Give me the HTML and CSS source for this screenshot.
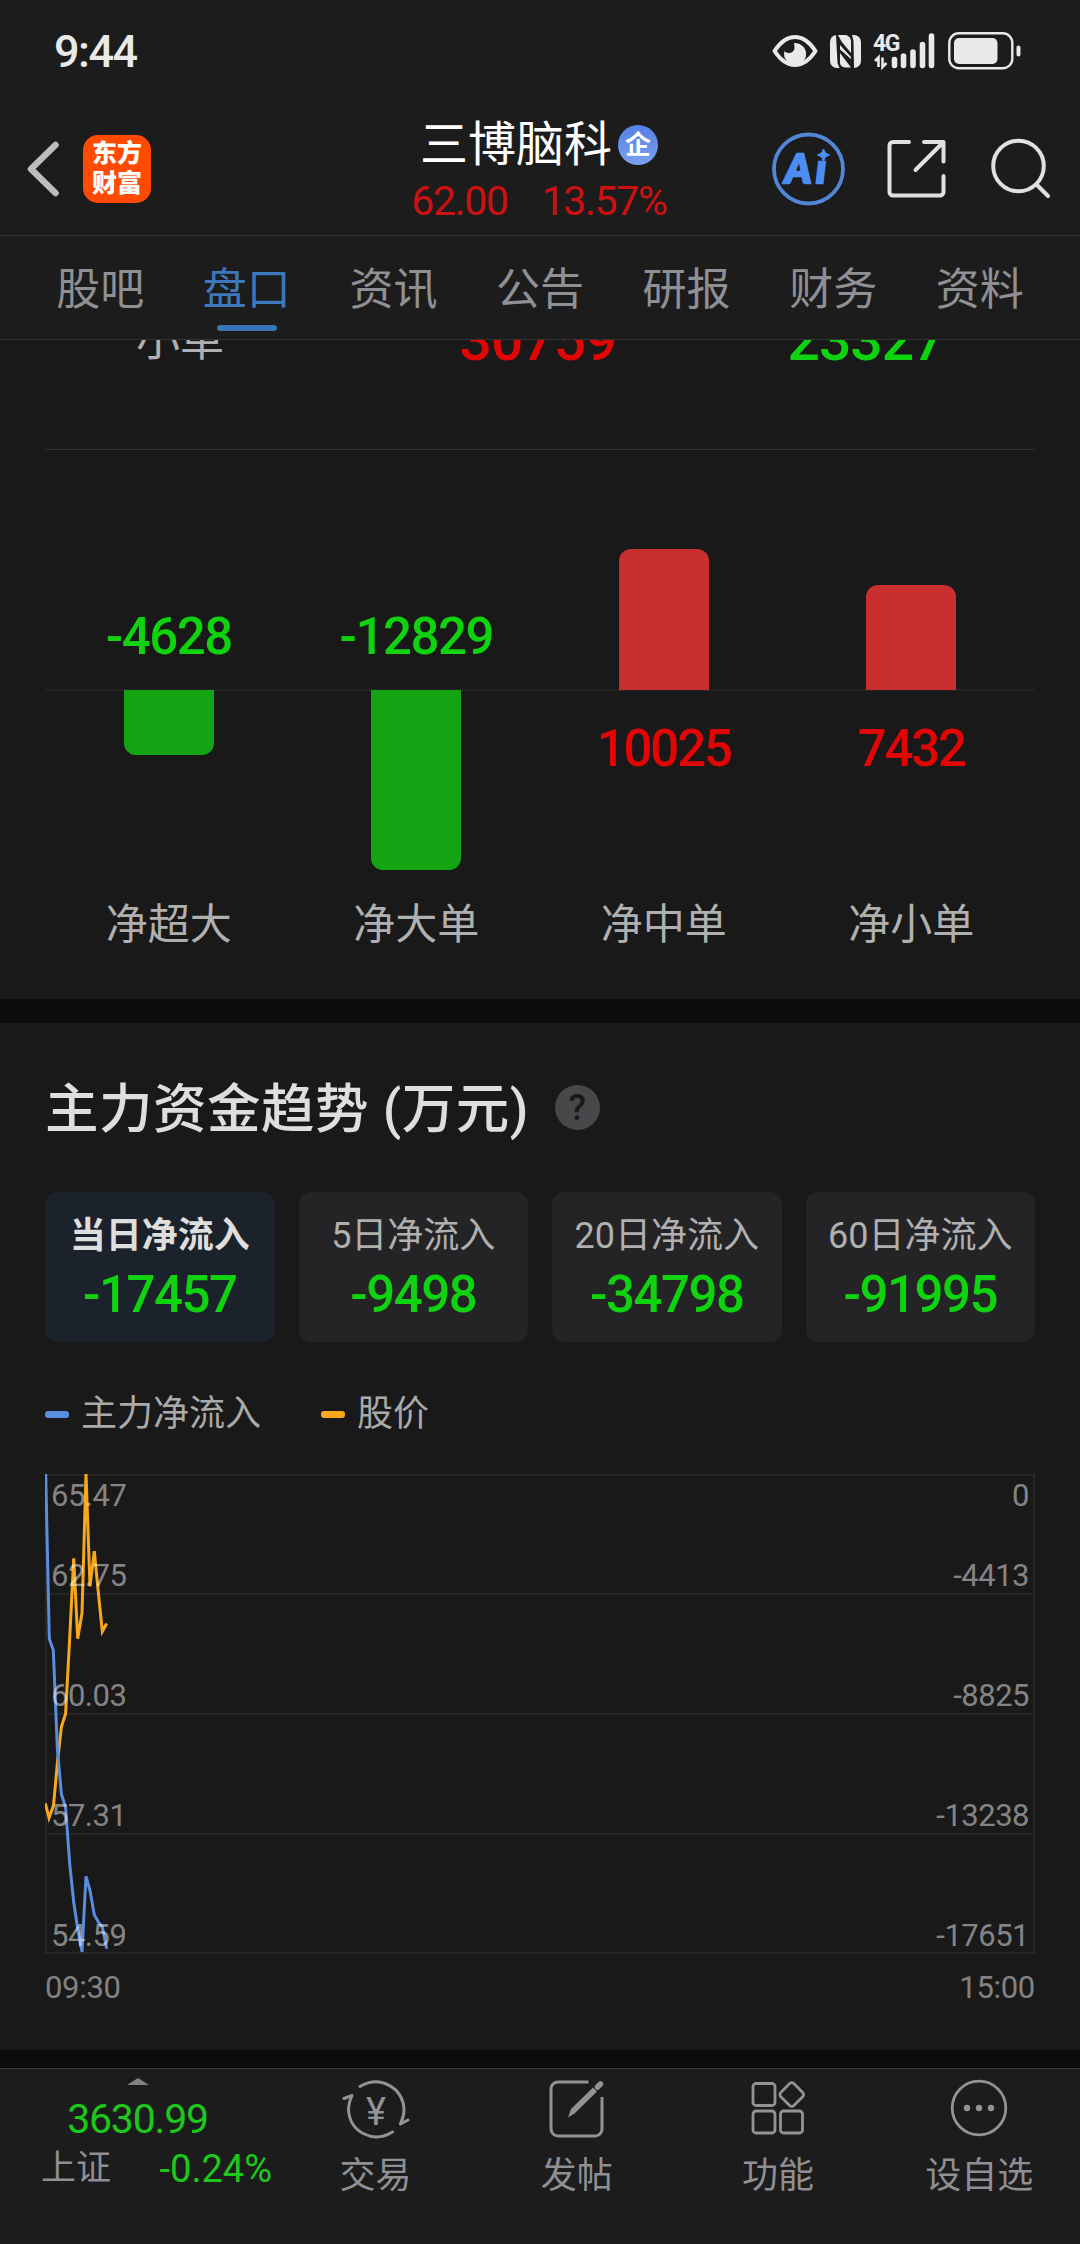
FILE: index.html
```html
<!DOCTYPE html>
<html lang="zh-CN">

<head>
  <meta charset="UTF-8">
  <meta name="viewport" content="width=device-width, initial-scale=1.0">
  <title>三博脑科 - 盘口</title>
  <link rel="stylesheet" href="styles.css">
</head>

<body>
  <div class="app">
    <div class="status-bar">
      <span class="clock">9:44</span>
      <div class="status-icons">
        <svg class="eye" width="46" height="32" viewBox="0 0 46 32">
          <path d="M2.500 16C9 6 16 2 23 2s14 4 20.500 14C37 26 30 30 23 30S9 26 2.500 16z" fill="none" stroke="#e9e9e9" stroke-width="4" stroke-linejoin="round"/>
          <path d="M22 8a11 11 0 1 1-9.500 8c2 3 9.500 3 10-3 .2-2-.5-3.500-.5-5z" fill="#e9e9e9"/>
        </svg>
        <svg class="nfc" width="31" height="33" viewBox="0 0 31 33">
          <path d="M6 0L7.500 28l2 5H7a7 7 0 0 1-7-7V7a7 7 0 0 1 6-7zM22 0h2a7 7 0 0 1 7 7v19a7 7 0 0 1-7 7l-.5-27z" fill="#e9e9e9"/>
          <path d="M8 0h7a6 6 0 0 1 6 6v12L11.500 6.500zM10 10l11 12v2L10 14.500zM10 18l11 14.500h-6a5 5 0 0 1-5-5z" fill="#e9e9e9"/>
        </svg>
        <svg class="signal" width="63" height="36" viewBox="0 0 63 36">
          <text x="0" y="18" class="net">4G</text>
          <path d="M5.500 34V24.500L2 28M9.500 24.500V34l4-4" fill="none" stroke="#e9e9e9" stroke-width="2.600"/>
          <path d="M21.500 26.500v6M30.500 23v9.500M40 19v13.500M49.500 11.500v21M58.500 3v29.500" stroke="#e9e9e9" stroke-width="5.600" stroke-linecap="round"/>
        </svg>
        <svg class="battery" width="73" height="38" viewBox="0 0 73 38">
          <rect x="1.300" y="1.300" width="63" height="35" rx="9.500" fill="none" stroke="#e9e9e9" stroke-width="2.400"/>
          <rect x="6" y="6" width="43.500" height="26" rx="5" fill="#e9e9e9"/>
          <rect x="68.500" y="13.500" width="4" height="11" rx="2" fill="#e9e9e9"/>
        </svg>
      </div>
    </div>

    <header class="header">
      <div class="header-left">
        <svg width="32" height="56" viewBox="0 0 32 56">
          <path d="M28.500 4L4 28l24.500 24" fill="none" stroke="#bdbdbd" stroke-width="6.500" stroke-linecap="round" stroke-linejoin="round"/>
        </svg>
        <div class="logo"><span>东方</span><span>财富</span></div>
      </div>
      <div class="stock">
        <div class="stock-name">三博脑科<span class="badge">企</span></div>
        <div class="stock-price"><span>62.00</span><span>13.57%</span></div>
      </div>
      <div class="header-right">
        <svg class="ai" width="73" height="74" viewBox="0 0 73 74">
          <circle cx="36.500" cy="37" r="34.500" fill="none" stroke="#5287d8" stroke-width="3.800"/>
          <text x="13" y="51" class="ai-text">A</text>
          <text x="44" y="51" class="ai-text">ı</text>
          <path d="M51.500 17l2 4 4 2-4 2-2 4-2-4-4-2 4-2z" fill="#4d8cf2" stroke="#4d8cf2"/>
        </svg>
        <svg class="share" width="60" height="60" viewBox="0 0 60 60">
          <path d="M22 3H6a3.500 3.500 0 0 0-3.500 3.500V53a3.500 3.500 0 0 0 3.500 3.500h47a3.500 3.500 0 0 0 3.500-3.500V37M37 3h19.500v19.500M56 3.500L28.500 31" fill="none" stroke="#e0e0e0" stroke-width="4" stroke-linecap="round" stroke-linejoin="round"/>
        </svg>
        <svg class="search" width="60" height="62" viewBox="0 0 60 62">
          <circle cx="27.500" cy="28" r="25.300" fill="none" stroke="#e0e0e0" stroke-width="4"/>
          <path d="M46 47l11 11" stroke="#e0e0e0" stroke-width="4" stroke-linecap="round"/>
        </svg>
      </div>
    </header>

    <nav class="tabs">
      <span>股吧</span>
      <span class="active">盘口</span>
      <span>资讯</span>
      <span>公告</span>
      <span>研报</span>
      <span>财务</span>
      <span>资料</span>
    </nav>

    <main>
      <section class="orders">
        <div class="order-row">
          <span class="order-name">小单</span>
          <span class="order-num red">30759</span>
          <span class="order-num green">23327</span>
        </div>
        <div class="bars">
          <div class="bar-col down">
            <span class="bar-value green">-4628</span>
            <div class="bar" style="height: 65px"></div>
          </div>
          <div class="bar-col down">
            <span class="bar-value green">-12829</span>
            <div class="bar" style="height: 180px"></div>
          </div>
          <div class="bar-col up">
            <div class="bar" style="height: 141px"></div>
            <span class="bar-value red">10025</span>
          </div>
          <div class="bar-col up">
            <div class="bar" style="height: 105px"></div>
            <span class="bar-value red">7432</span>
          </div>
        </div>
        <div class="bar-labels">
          <span>净超大</span>
          <span>净大单</span>
          <span>净中单</span>
          <span>净小单</span>
        </div>
      </section>

      <section class="trend">
        <h2>主力资金趋势 (万元)<span class="help">?</span></h2>
        <div class="cards">
          <div class="card selected">
            <span class="card-label">当日净流入</span>
            <span class="card-value">-17457</span>
          </div>
          <div class="card">
            <span class="card-label">5日净流入</span>
            <span class="card-value">-9498</span>
          </div>
          <div class="card">
            <span class="card-label">20日净流入</span>
            <span class="card-value">-34798</span>
          </div>
          <div class="card">
            <span class="card-label">60日净流入</span>
            <span class="card-value">-91995</span>
          </div>
        </div>
        <div class="legend">
          <span class="flow">主力净流入</span>
          <span class="price">股价</span>
        </div>
        <div class="chart">
          <svg class="lines" width="990" height="480" viewBox="0 0 990 480">
            <path d="M0 1H990M0 120H990M0 240H990M0 360H990M0 479H990M1 0V480M989 0V480" stroke="#262628" stroke-width="2"/>
            <polyline points="0.300,329.300 4,343.900 8.500,331.600 12.600,286.500 16.400,252.800 20.600,239.800 24.700,164 28.700,84.400 32.700,164.800 37,139.100 41,0 45,112.300 49.300,77.100 53.300,118.100 57.300,157.500 61.700,149.500" fill="none" stroke="#f7a81b" stroke-width="3"/>
            <polyline points="0.700,0 4.300,164.800 8.300,176.300 12.400,275 16.400,320.100 20.600,333.200 24.700,389.800 28.700,428 32.700,454.900 37,478 41,402.400 45,416.600 49.300,440.700 53.300,448 57.300,453 61.700,474.800" fill="none" stroke="#5a8dde" stroke-width="3"/>
          </svg>
          <div class="grid-row first"><span>65.47</span><span>0</span></div>
          <div class="grid-row"><span>62.75</span><span>-4413</span></div>
          <div class="grid-row"><span>60.03</span><span>-8825</span></div>
          <div class="grid-row"><span>57.31</span><span>-13238</span></div>
          <div class="grid-row"><span>54.59</span><span>-17651</span></div>
        </div>
        <div class="times"><span>09:30</span><span>15:00</span></div>
      </section>
    </main>

    <footer class="footer">
      <div class="index">
        <i class="arrow-up"></i>
        <div class="index-value">3630.99</div>
        <div class="index-row"><span class="index-name">上证</span><span class="index-change">-0.24%</span></div>
      </div>
      <div class="nav-item">
        <svg width="68" height="62" viewBox="0 0 68 62">
          <g fill="none" stroke="#929297" stroke-width="3" stroke-linecap="round" stroke-linejoin="round">
            <path d="M18 7.500C38-4 61 8 62 31c0 6-2 10-3.500 14l7.500-4"/>
            <path d="M50.500 53C31 65 8 53 6.500 31c0-6 1.500-10 3.500-14.500L2 19.500"/>
          </g>
          <text x="34" y="45.500" class="yuan" text-anchor="middle">¥</text>
        </svg>
        <span>交易</span>
      </div>
      <div class="nav-item">
        <svg width="56" height="62" viewBox="0 0 56 62">
          <path d="M39.500 3H9a7 7 0 0 0-7 7v40a7 7 0 0 0 7 7h37a7 7 0 0 0 7-7V18" fill="none" stroke="#929297" stroke-width="3"/>
          <path d="M19 38.500l3-8.500 22-21.500 4 4-22.500 22z" fill="#929297"/>
          <path d="M48.500 8l3-3" stroke="#929297" stroke-width="5.500" stroke-linecap="round"/>
        </svg>
        <span>发帖</span>
      </div>
      <div class="nav-item">
        <svg width="54" height="62" viewBox="0 0 54 62">
          <g fill="none" stroke="#929297" stroke-width="2.800" stroke-linejoin="round">
            <rect x="2" y="4.500" width="22" height="22" rx="3"/>
            <rect x="2" y="32" width="22" height="22" rx="3"/>
            <rect x="29.500" y="32" width="22" height="22" rx="3"/>
            <rect x="31.500" y="6.300" width="18.500" height="18.500" rx="3" transform="rotate(45 40.750 15.550)"/>
          </g>
        </svg>
        <span>功能</span>
      </div>
      <div class="nav-item">
        <svg width="58" height="62" viewBox="0 0 58 62">
          <circle cx="29" cy="29" r="26.800" fill="none" stroke="#929297" stroke-width="2.800"/>
          <circle cx="17" cy="29" r="3.200" fill="#929297"/>
          <circle cx="29" cy="29" r="3.200" fill="#929297"/>
          <circle cx="41" cy="29" r="3.200" fill="#929297"/>
        </svg>
        <span>设自选</span>
      </div>
    </footer>
  </div>
</body>

</html>
```

FILE: styles.css
```css
* {
  margin: 0;
  padding: 0;
  box-sizing: border-box;
}

body {
  width: 1080px;
  height: 2244px;
  overflow: hidden;
  background: #19191a;
  color: #dedede;
  font-family: Roboto, "Noto Sans CJK SC", sans-serif;
}

svg {
  display: block;
  flex: none;
}

.red {
  color: #e10505;
}

.green {
  color: #0fd30f;
}

.app {
  height: 2244px;
  display: flex;
  flex-direction: column;
}

/* 状态栏 */
.status-bar {
  height: 102px;
  padding: 0 59px 0 54px;
  display: flex;
  justify-content: space-between;
  align-items: center;
  background: #1c1c1c;
}

.clock {
  font-size: 45px;
  line-height: 60px;
  padding-top: 2px;
  font-weight: 500;
  letter-spacing: -1.5px;
  color: #e9e9e9;
}

.status-icons {
  display: flex;
  align-items: center;
  gap: 12px;
}

.signal {
  overflow: visible;
}

.net {
  font-size: 23px;
  font-weight: 700;
  letter-spacing: -1.5px;
  fill: #e9e9e9;
}

/* 顶部 */
.header {
  height: 134px;
  padding: 0 29px 0 27px;
  display: grid;
  grid-template-columns: 1fr auto 1fr;
  align-items: center;
  background: #1c1c1c;
  border-bottom: 1px solid #333;
}

.header-left {
  display: flex;
  align-items: center;
  gap: 24px;
}

.logo {
  width: 68px;
  height: 68px;
  padding-top: 4px;
  border-radius: 15px;
  background: #ff4a02;
  color: #fff;
  display: flex;
  flex-direction: column;
  align-items: center;
  font-size: 25px;
  font-weight: 900;
  line-height: 30px;
}

.stock {
  text-align: center;
  padding-top: 3px;
}

.stock-name {
  height: 61px;
  line-height: 61px;
  display: flex;
  justify-content: center;
  align-items: center;
  gap: 6px;
  font-size: 48px;
  color: #fff;
}

.badge {
  width: 40px;
  height: 40px;
  border-radius: 50%;
  background: linear-gradient(#5580e6, #7aa2ee);
  font-size: 26px;
  line-height: 40px;
  font-weight: 700;
}

.stock-price {
  display: flex;
  justify-content: center;
  gap: 34px;
  height: 51px;
  line-height: 53px;
  font-size: 41px;
  letter-spacing: -1.3px;
  color: #cc1111;
}

.header-right {
  display: flex;
  justify-content: flex-end;
  align-items: center;
}

.share {
  margin: 0 44px 0 42px;
}

.ai-text {
  font-family: Lato, sans-serif;
  font-size: 40px;
  font-weight: 900;
  font-style: italic;
  fill: #4d8cf2;
  stroke: #4d8cf2;
  stroke-width: 2.5px;
}

/* 标签页 */
.tabs {
  height: 104px;
  padding: 0 27px;
  display: flex;
  background: #1c1c1c;
  border-bottom: 1px solid #333;
}

.tabs span {
  flex: 1;
  text-align: center;
  font-size: 44px;
  line-height: 109px;
  color: #8f8f94;
}

.tabs .active {
  color: #3b78bc;
}

.tabs .active::after {
  content: "";
  display: block;
  width: 60px;
  height: 6px;
  margin: -20px auto 0;
  border-radius: 3px;
  background: #3875b8;
}

/* 成交分布 */
.orders {
  height: 659px;
  padding: 0 45px;
  overflow: hidden;
}

.order-row {
  height: 110px;
  border-bottom: 1px solid #303032;
  display: grid;
  grid-template-columns: 270px 446px 210px;
  text-align: center;
}

.order-row span {
  line-height: 60px;
  margin-top: -29px;
}

.order-name {
  font-size: 44px;
  color: #b0b0b0;
}

.order-num {
  font-size: 57px;
  font-weight: 500;
  letter-spacing: -1px;
}

.bars {
  height: 430px;
  display: grid;
  grid-template-columns: repeat(4, 1fr);
  background: linear-gradient(#232325, #232325) 0 239px / 100% 2px no-repeat;
}

.bar-col {
  display: flex;
  flex-direction: column;
  align-items: center;
}

.bar {
  width: 90px;
  flex: none;
}

.down .bar {
  background: #12a412;
  border-radius: 0 0 12px 12px;
}

.up .bar {
  background: #ca2f30;
  border-radius: 12px 12px 0 0;
  margin-top: auto;
}

.up {
  height: 329px;
}

.bar-value {
  font-size: 51px;
  font-weight: 500;
  letter-spacing: -1.5px;
  line-height: 60px;
}

.down .bar-value {
  margin: 157px 0 23px;
}

.up .bar-value {
  margin-top: 29px;
  letter-spacing: -2.2px;
}

.bar-labels {
  display: grid;
  grid-template-columns: repeat(4, 1fr);
  text-align: center;
  font-size: 42px;
  line-height: 89px;
  color: #b0b0b0;
}

/* 资金趋势 */
.trend {
  height: 1069px;
  border-top: 24px solid #0c0c0c;
  border-bottom: 18px solid #0c0c0c;
  padding: 44px 45px 0;
}

.trend h2 {
  height: 86px;
  line-height: 86px;
  display: flex;
  align-items: center;
  gap: 26px;
  font-size: 53.5px;
  font-weight: 500;
  letter-spacing: 0.5px;
  color: #dedede;
}

.help {
  width: 45px;
  height: 45px;
  margin-top: -5px;
  border-radius: 50%;
  background: #48484b;
  color: #19191a;
  font-size: 36px;
  font-weight: 500;
  line-height: 46px;
  text-align: center;
}

.cards {
  margin-top: 39px;
  display: grid;
  grid-template-columns: repeat(4, 1fr);
  gap: 24px;
}

.card {
  height: 150px;
  padding-top: 19px;
  border-radius: 12px;
  background: #242426;
  display: flex;
  flex-direction: column;
  align-items: center;
}

.card.selected {
  background: #1b222b;
}

.card-label {
  font-size: 36px;
  line-height: 50px;
  color: #b0b0b0;
}

.selected .card-label {
  font-weight: 700;
  color: #dedede;
}

.card-value {
  font-size: 51px;
  font-weight: 500;
  letter-spacing: -1.5px;
  line-height: 68px;
  color: #0fd30f;
}

.legend {
  height: 132px;
  padding-top: 12px;
  display: flex;
  align-items: center;
  gap: 60px;
  font-size: 36px;
  line-height: 50px;
  color: #aaa;
}

.legend span {
  display: flex;
  align-items: center;
  gap: 12px;
}

.legend span::before {
  content: "";
  width: 24px;
  height: 7px;
  border-radius: 3px;
  background: #5a8dde;
}

.legend .price::before {
  background: #f7a81b;
}

.chart {
  position: relative;
  height: 480px;
}

.lines {
  position: absolute;
  left: 0;
  top: 0;
}

.grid-row {
  position: relative;
  height: 120px;
  padding: 0 6px;
  display: flex;
  justify-content: space-between;
  align-items: flex-end;
  font-size: 31px;
  line-height: 36px;
  letter-spacing: -0.5px;
  color: rgba(255, 255, 255, 0.48);
}

.grid-row.first {
  height: 40px;
}

.grid-row:nth-child(3) {
  height: 80px;
}

.times {
  display: flex;
  justify-content: space-between;
  font-size: 31px;
  line-height: 67px;
  letter-spacing: -0.3px;
  color: #828283;
}

/* 底部栏 */
.footer {
  height: 176px;
  display: grid;
  grid-template-columns: 275px repeat(4, 1fr);
  background: #1c1c1c;
  border-top: 1px solid #3a3a3a;
}

.index {
  text-align: center;
}

.arrow-up {
  display: block;
  width: 0;
  margin: 9px auto 0;
  border: 11px solid transparent;
  border-top: 0;
  border-bottom: 7px solid #808085;
}

.index-value {
  margin-top: 9px;
  font-size: 41px;
  line-height: 50px;
  letter-spacing: -1.2px;
  color: #1cc81c;
}

.index-row {
  padding: 0 3px 0 41px;
  display: flex;
  justify-content: space-between;
  font-size: 35px;
  line-height: 50px;
  color: #8f8f94;
}

.index-change {
  font-size: 38px;
  color: #1cc81c;
}

.nav-item {
  padding-top: 10px;
  display: flex;
  flex-direction: column;
  align-items: center;
  font-size: 36px;
  line-height: 71px;
  color: #8f8f94;
}

.yuan {
  font-size: 38px;
  fill: #929297;
}
```
